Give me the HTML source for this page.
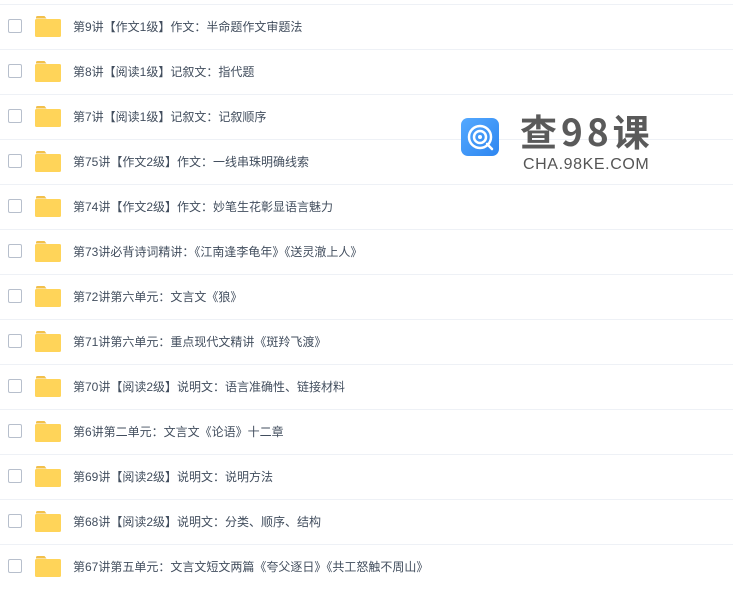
<!DOCTYPE html>
<html><head><meta charset="utf-8"><style>
*{margin:0;padding:0;box-sizing:border-box}
body{width:733px;height:584px;background:#fff;position:relative;overflow:hidden;font-family:"Liberation Sans","Noto Sans CJK SC",sans-serif}
.row{position:absolute;left:0;width:733px;height:45px;border-top:1px solid #eef1f6}
.cb{position:absolute;left:8px;top:14px;width:14px;height:14px;border:1px solid #b7bfcc;border-radius:2px;background:#fff}
.fd{position:absolute;left:35px;top:11px;width:26px;height:21px}
.tx{position:absolute;left:73px;top:14px;font-size:12px;color:#424e5e;line-height:16px;white-space:nowrap}
.logo{position:absolute;left:461px;top:118px;width:38px;height:38px;border-radius:7px;background:linear-gradient(135deg,#54a9ff,#2e86f0)}
.t1{position:absolute;left:520px;top:108px;font-size:37px;font-weight:bold;color:#5a5a5a;letter-spacing:4px;font-family:"Noto Sans CJK SC",sans-serif;line-height:44px}
.t2{position:absolute;left:523px;top:156px;font-size:16px;color:#555;letter-spacing:0.6px;line-height:18px}
</style></head><body>
<div class="row" style="top:4px"><div class="cb"></div><svg class="fd" viewBox="0 0 26 21"><path d="M1 1.5a1.5 1.5 0 0 1 1.5-1.5h7l2 2.5H1z" fill="#f2c04b"/><rect x="0" y="3" width="26" height="18" rx="1.5" fill="#ffd459"/></svg><div class="tx">第9讲【作文1级】作文：半命题作文审题法</div></div>
<div class="row" style="top:49px"><div class="cb"></div><svg class="fd" viewBox="0 0 26 21"><path d="M1 1.5a1.5 1.5 0 0 1 1.5-1.5h7l2 2.5H1z" fill="#f2c04b"/><rect x="0" y="3" width="26" height="18" rx="1.5" fill="#ffd459"/></svg><div class="tx">第8讲【阅读1级】记叙文：指代题</div></div>
<div class="row" style="top:94px"><div class="cb"></div><svg class="fd" viewBox="0 0 26 21"><path d="M1 1.5a1.5 1.5 0 0 1 1.5-1.5h7l2 2.5H1z" fill="#f2c04b"/><rect x="0" y="3" width="26" height="18" rx="1.5" fill="#ffd459"/></svg><div class="tx">第7讲【阅读1级】记叙文：记叙顺序</div></div>
<div class="row" style="top:139px"><div class="cb"></div><svg class="fd" viewBox="0 0 26 21"><path d="M1 1.5a1.5 1.5 0 0 1 1.5-1.5h7l2 2.5H1z" fill="#f2c04b"/><rect x="0" y="3" width="26" height="18" rx="1.5" fill="#ffd459"/></svg><div class="tx">第75讲【作文2级】作文：一线串珠明确线索</div></div>
<div class="row" style="top:184px"><div class="cb"></div><svg class="fd" viewBox="0 0 26 21"><path d="M1 1.5a1.5 1.5 0 0 1 1.5-1.5h7l2 2.5H1z" fill="#f2c04b"/><rect x="0" y="3" width="26" height="18" rx="1.5" fill="#ffd459"/></svg><div class="tx">第74讲【作文2级】作文：妙笔生花彰显语言魅力</div></div>
<div class="row" style="top:229px"><div class="cb"></div><svg class="fd" viewBox="0 0 26 21"><path d="M1 1.5a1.5 1.5 0 0 1 1.5-1.5h7l2 2.5H1z" fill="#f2c04b"/><rect x="0" y="3" width="26" height="18" rx="1.5" fill="#ffd459"/></svg><div class="tx">第73讲必背诗词精讲：《江南逢李龟年》《送灵澈上人》</div></div>
<div class="row" style="top:274px"><div class="cb"></div><svg class="fd" viewBox="0 0 26 21"><path d="M1 1.5a1.5 1.5 0 0 1 1.5-1.5h7l2 2.5H1z" fill="#f2c04b"/><rect x="0" y="3" width="26" height="18" rx="1.5" fill="#ffd459"/></svg><div class="tx">第72讲第六单元：文言文《狼》</div></div>
<div class="row" style="top:319px"><div class="cb"></div><svg class="fd" viewBox="0 0 26 21"><path d="M1 1.5a1.5 1.5 0 0 1 1.5-1.5h7l2 2.5H1z" fill="#f2c04b"/><rect x="0" y="3" width="26" height="18" rx="1.5" fill="#ffd459"/></svg><div class="tx">第71讲第六单元：重点现代文精讲《斑羚飞渡》</div></div>
<div class="row" style="top:364px"><div class="cb"></div><svg class="fd" viewBox="0 0 26 21"><path d="M1 1.5a1.5 1.5 0 0 1 1.5-1.5h7l2 2.5H1z" fill="#f2c04b"/><rect x="0" y="3" width="26" height="18" rx="1.5" fill="#ffd459"/></svg><div class="tx">第70讲【阅读2级】说明文：语言准确性、链接材料</div></div>
<div class="row" style="top:409px"><div class="cb"></div><svg class="fd" viewBox="0 0 26 21"><path d="M1 1.5a1.5 1.5 0 0 1 1.5-1.5h7l2 2.5H1z" fill="#f2c04b"/><rect x="0" y="3" width="26" height="18" rx="1.5" fill="#ffd459"/></svg><div class="tx">第6讲第二单元：文言文《论语》十二章</div></div>
<div class="row" style="top:454px"><div class="cb"></div><svg class="fd" viewBox="0 0 26 21"><path d="M1 1.5a1.5 1.5 0 0 1 1.5-1.5h7l2 2.5H1z" fill="#f2c04b"/><rect x="0" y="3" width="26" height="18" rx="1.5" fill="#ffd459"/></svg><div class="tx">第69讲【阅读2级】说明文：说明方法</div></div>
<div class="row" style="top:499px"><div class="cb"></div><svg class="fd" viewBox="0 0 26 21"><path d="M1 1.5a1.5 1.5 0 0 1 1.5-1.5h7l2 2.5H1z" fill="#f2c04b"/><rect x="0" y="3" width="26" height="18" rx="1.5" fill="#ffd459"/></svg><div class="tx">第68讲【阅读2级】说明文：分类、顺序、结构</div></div>
<div class="row" style="top:544px"><div class="cb"></div><svg class="fd" viewBox="0 0 26 21"><path d="M1 1.5a1.5 1.5 0 0 1 1.5-1.5h7l2 2.5H1z" fill="#f2c04b"/><rect x="0" y="3" width="26" height="18" rx="1.5" fill="#ffd459"/></svg><div class="tx">第67讲第五单元：文言文短文两篇《夸父逐日》《共工怒触不周山》</div></div>
<div class="logo"><svg width="38" height="38" viewBox="0 0 38 38"><circle cx="19" cy="19" r="11" fill="none" stroke="#fff" stroke-width="2.5"/><circle cx="19" cy="19" r="6" fill="none" stroke="#fff" stroke-width="2.5"/><path d="M26 26l5 5" stroke="#fff" stroke-width="2.5" stroke-linecap="round"/><circle cx="19" cy="19" r="2" fill="#fff"/></svg></div>
<div class="t1">查98课</div>
<div class="t2">CHA.98KE.COM</div>
</body></html>
